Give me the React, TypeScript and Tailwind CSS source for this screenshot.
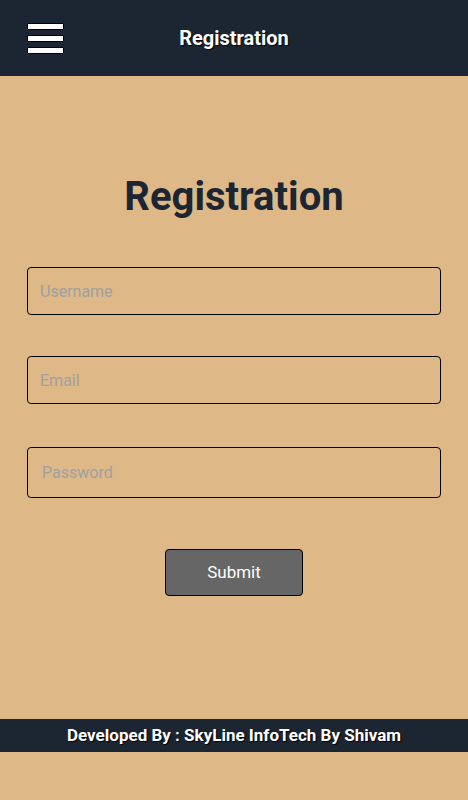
import React, { useState } from 'react';

const App: React.FC = () => {
  const [username, setUsername] = useState('');
  const [email, setEmail] = useState('');
  const [password, setPassword] = useState('');

  return (
    <div className="min-h-screen bg-[#deb887] font-['Roboto',sans-serif] flex flex-col">
      {/* header */}
      <div className="h-[76px] bg-[#1c2632] flex items-center px-[27px]">
        <div className="flex flex-col gap-[5px]">
          <span className="block w-[37px] h-[7px] bg-white border border-black rounded-[1px]" />
          <span className="block w-[37px] h-[7px] bg-white border border-black rounded-[1px]" />
          <span className="block w-[37px] h-[7px] bg-white border border-black rounded-[1px]" />
        </div>
        <h2 className="flex-1 text-center text-white font-bold text-[20px] pr-[37px] [text-shadow:1px_1px_1px_#000]">
          Registration
        </h2>
      </div>

      {/* form */}
      <div className="flex flex-col px-[27px] pt-[98px]">
        <h1 className="text-center text-[40px] font-bold text-[#1c2632] leading-[46px]">Registration</h1>

        <input
          placeholder="Username"
          value={username}
          onChange={(e) => setUsername(e.target.value)}
          className="mt-[47px] h-[48px] w-full border border-black rounded-[4px] bg-transparent px-3 text-[16px] placeholder:text-[#a0a0a0] outline-none"
        />
        <input
          placeholder="Email"
          type="email"
          value={email}
          onChange={(e) => setEmail(e.target.value)}
          className="mt-[41px] h-[48px] w-full border border-black rounded-[4px] bg-transparent px-3 text-[16px] placeholder:text-[#a0a0a0] outline-none"
        />
        <input
          placeholder="Password"
          type="password"
          value={password}
          onChange={(e) => setPassword(e.target.value)}
          className="mt-[43px] h-[51px] w-full border border-black rounded-[4px] bg-transparent px-[14px] text-[16px] placeholder:text-[#a0a0a0] outline-none"
        />

        <div className="flex justify-center mt-[51px]">
          <button className="w-[138px] h-[47px] bg-[#666666] border border-black rounded-[4px] text-white text-[17px]">
            Submit
          </button>
        </div>
      </div>

      {/* footer */}
      <div className="mt-[123px] h-[33px] bg-[#1c2632] flex items-center justify-center">
        <p className="text-white font-bold text-[17px] [text-shadow:1px_1px_1px_#000]">
          Developed By : SkyLine InfoTech By Shivam
        </p>
      </div>
    </div>
  );
};

export default App;
